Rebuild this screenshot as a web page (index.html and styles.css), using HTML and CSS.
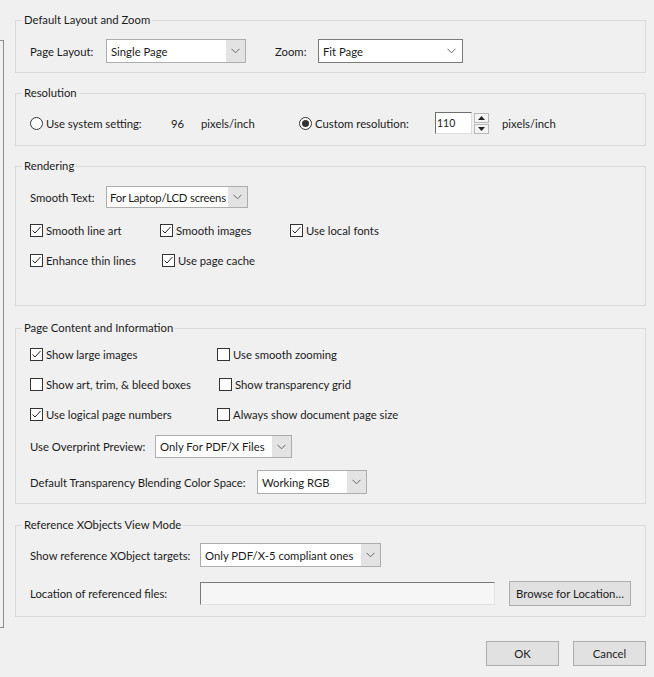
FILE: index.html
```html
<!DOCTYPE html>
<html>
<head>
<meta charset="utf-8">
<link rel="stylesheet" href="styles.css">
</head>
<body>
<div class="page">
  <div class="edge"></div>
  <div class="content">

    <fieldset class="group g1">
      <legend>Default Layout and Zoom</legend>
      <div class="row h24">
        <span class="lbl w76">Page Layout:</span>
        <div class="select w140 h24"><span class="val">Single Page</span><span class="arrow"><svg width="9" height="6" viewBox="0 0 9 6"><polyline points="0.5,0.8 4.5,4.8 8.5,0.8" fill="none" stroke="#666" stroke-width="1"/></svg></span></div>
        <span class="lbl w43 ml29">Zoom:</span>
        <div class="select plain w145 h24"><span class="val">Fit Page</span><span class="arrow"><svg width="9" height="6" viewBox="0 0 9 6"><polyline points="0.5,0.8 4.5,4.8 8.5,0.8" fill="none" stroke="#666" stroke-width="1"/></svg></span></div>
      </div>
    </fieldset>

    <fieldset class="group g2">
      <legend>Resolution</legend>
      <div class="row h22">
        <span class="radio"></span>
        <span class="lbl w125 ml3">Use system setting:</span>
        <span class="lbl w30">96</span>
        <span class="lbl w98">pixels/inch</span>
        <span class="radio on"></span>
        <span class="lbl w120 ml3">Custom resolution:</span>
        <div class="num">110</div>
        <div class="spin">
          <span class="spin-btn"><svg width="7" height="4" viewBox="0 0 7 4"><polygon points="3.5,0 7,4 0,4" fill="#222"/></svg></span>
          <span class="spin-btn"><svg width="7" height="4" viewBox="0 0 7 4"><polygon points="0,0 7,0 3.5,4" fill="#222"/></svg></span>
        </div>
        <span class="lbl ml13">pixels/inch</span>
      </div>
    </fieldset>

    <fieldset class="group g3">
      <legend>Rendering</legend>
      <div class="row h22">
        <span class="lbl w76">Smooth Text:</span>
        <div class="select w142 h22"><span class="val tight">For Laptop/LCD screens</span><span class="arrow"><svg width="9" height="6" viewBox="0 0 9 6"><polyline points="0.5,0.8 4.5,4.8 8.5,0.8" fill="none" stroke="#666" stroke-width="1"/></svg></span></div>
      </div>
      <div class="row h20 mt12">
        <span class="cb w130"><span class="box on"></span>Smooth line art</span>
        <span class="cb w130"><span class="box on"></span>Smooth images</span>
        <span class="cb"><span class="box on"></span>Use local fonts</span>
      </div>
      <div class="row h20 mt10">
        <span class="cb w132"><span class="box on"></span>Enhance thin lines</span>
        <span class="cb"><span class="box on"></span>Use page cache</span>
      </div>
    </fieldset>

    <fieldset class="group g4">
      <legend>Page Content and Information</legend>
      <div class="row h20">
        <span class="cb w187"><span class="box on"></span>Show large images</span>
        <span class="cb"><span class="box"></span>Use smooth zooming</span>
      </div>
      <div class="row h20 mt10">
        <span class="cb w189"><span class="box"></span>Show art, trim, &amp; bleed boxes</span>
        <span class="cb"><span class="box"></span>Show transparency grid</span>
      </div>
      <div class="row h20 mt10">
        <span class="cb w187"><span class="box on"></span>Use logical page numbers</span>
        <span class="cb"><span class="box"></span>Always show document page size</span>
      </div>
      <div class="row h23 mt11">
        <span class="lbl w125">Use Overprint Preview:</span>
        <div class="select w137 h23"><span class="val">Only For PDF/X Files</span><span class="arrow"><svg width="9" height="6" viewBox="0 0 9 6"><polyline points="0.5,0.8 4.5,4.8 8.5,0.8" fill="none" stroke="#666" stroke-width="1"/></svg></span></div>
      </div>
      <div class="row h24 mt12">
        <span class="lbl w227">Default Transparency Blending Color Space:</span>
        <div class="select w110 h24"><span class="val">Working RGB</span><span class="arrow"><svg width="9" height="6" viewBox="0 0 9 6"><polyline points="0.5,0.8 4.5,4.8 8.5,0.8" fill="none" stroke="#666" stroke-width="1"/></svg></span></div>
      </div>
    </fieldset>

    <fieldset class="group g5">
      <legend>Reference XObjects View Mode</legend>
      <div class="row h24">
        <span class="lbl w170">Show reference XObject targets:</span>
        <div class="select w181 h24"><span class="val">Only PDF/X-5 compliant ones</span><span class="arrow"><svg width="9" height="6" viewBox="0 0 9 6"><polyline points="0.5,0.8 4.5,4.8 8.5,0.8" fill="none" stroke="#666" stroke-width="1"/></svg></span></div>
      </div>
      <div class="row h25 mt14">
        <span class="lbl w170">Location of referenced files:</span>
        <div class="field"></div>
        <button class="btn w122 ml14">Browse for Location…</button>
      </div>
    </fieldset>

    <div class="actions">
      <button class="btn w73">OK</button>
      <button class="btn w73">Cancel</button>
    </div>
  </div>
</div>
</body>
</html>
```

FILE: styles.css
```css
html, body {
  margin: 0;
  padding: 0;
  background: #f0f0f0;
}
body {
  font-family: "Lato", "Noto Sans", sans-serif;
  font-size: 11.3px;
  color: #1b1b1b;
  width: 654px;
  height: 677px;
  overflow: hidden;
}
.page {
  display: flex;
  align-items: flex-start;
}
.edge {
  width: 3px;
  height: 586px;
  margin-top: 40px;
  border-top: 1px solid #8f8f8f;
  border-right: 1px solid #8f8f8f;
  border-bottom: 1px solid #8f8f8f;
  flex: none;
}
.content {
  margin-left: 11px;
  width: 631px;
  padding-top: 12px;
  flex: none;
}
.group {
  margin: 0;
  border: 1px solid #dadada;
  padding: 0 10px 0 14px;
  min-width: 0;
}
.group legend {
  padding: 0 2px;
  margin-left: -8px;
  line-height: 16px;
  height: 16px;
  font-size: 11.3px;
  color: #1b1b1b;
}
.g1 { padding-top: 11px; padding-bottom: 9px; }
.g2 { margin-top: 12px; padding-top: 11px; padding-bottom: 11px; }
.g3 { margin-top: 12px; padding-top: 12px; padding-bottom: 35px; }
.g4 { margin-top: 14px; padding-top: 8px; padding-bottom: 9px; }
.g5 { margin-top: 13px; padding-top: 10px; padding-bottom: 10px; }

.row {
  display: flex;
  align-items: center;
  white-space: nowrap;
}
.h20 { height: 20px; }
.h22 { height: 22px; }
.h23 { height: 23px; }
.h24 { height: 24px; }
.h25 { height: 25px; }
.mt10 { margin-top: 10px; }
.mt11 { margin-top: 11px; }
.mt12 { margin-top: 12px; }
.mt14 { margin-top: 14px; }
.ml3 { margin-left: 3px; }
.ml13 { margin-left: 13px; }
.ml14 { margin-left: 14px; }
.ml29 { margin-left: 29px; }

.lbl { flex: none; }
.w30 { width: 30px; }
.w43 { width: 43px; }
.w73 { width: 73px; }
.w76 { width: 76px; }
.w98 { width: 98px; }
.w110 { width: 110px; }
.w120 { width: 120px; }
.w122 { width: 122px; }
.w125 { width: 125px; }
.w130 { width: 130px; }
.w132 { width: 132px; }
.w137 { width: 137px; }
.w140 { width: 140px; }
.w142 { width: 142px; }
.w145 { width: 145px; }
.w170 { width: 170px; }
.w181 { width: 181px; }
.w187 { width: 187px; }
.w189 { width: 189px; }
.w227 { width: 227px; }

.select {
  box-sizing: border-box;
  display: flex;
  align-items: stretch;
  border: 1px solid #adadad;
  background: #ffffff;
  flex: none;
}
.select .val {
  flex: 1;
  display: flex;
  align-items: center;
  padding-left: 4px;
  overflow: hidden;
}
.select .val.tight {
  padding-left: 3px;
  letter-spacing: -0.2px;
}
.select .arrow {
  width: 19px;
  flex: none;
  display: flex;
  align-items: center;
  justify-content: center;
  background: #e3e3e3;
}
.select.plain {
  border-color: #7a7a7a;
}
.select.plain .arrow {
  background: #ffffff;
  width: 22px;
}

.radio {
  box-sizing: border-box;
  width: 13px;
  height: 13px;
  border: 1px solid #333;
  border-radius: 50%;
  background: #fff;
  flex: none;
  display: flex;
  align-items: center;
  justify-content: center;
}
.radio.on::after {
  content: "";
  width: 7px;
  height: 7px;
  border-radius: 50%;
  background: #333;
}

.num {
  box-sizing: border-box;
  width: 37px;
  height: 22px;
  border-top: 1px solid #6e6e6e;
  border-left: 1px solid #6e6e6e;
  border-right: 1px solid #dcdcdc;
  border-bottom: 1px solid #dcdcdc;
  background: #fff;
  padding-left: 1px;
  display: flex;
  align-items: center;
  font-size: 10.5px;
  flex: none;
}
.spin {
  margin-left: 2px;
  width: 15px;
  height: 21px;
  display: flex;
  flex-direction: column;
  gap: 1px;
  flex: none;
}
.spin-btn {
  box-sizing: border-box;
  flex: 1;
  border: 1px solid #b8b8b8;
  background: #f4f4f4;
  display: flex;
  align-items: center;
  justify-content: center;
}

.cb {
  display: flex;
  align-items: center;
  flex: none;
}
.box {
  box-sizing: border-box;
  width: 13px;
  height: 13px;
  border: 1px solid #333;
  background: #fff;
  margin-right: 3px;
  flex: none;
}
.box.on {
  background-image: url("data:image/svg+xml;utf8,<svg xmlns='http://www.w3.org/2000/svg' width='11' height='11' viewBox='0 0 11 11'><polyline points='1.5,5.5 4,8 9.5,2' fill='none' stroke='%23222' stroke-width='1'/></svg>");
  background-repeat: no-repeat;
  background-position: 0 0;
}

.field {
  box-sizing: border-box;
  width: 295px;
  height: 23px;
  border-top: 1px solid #7a7a7a;
  border-left: 1px solid #7a7a7a;
  border-right: 1px solid #e2e2e2;
  border-bottom: 1px solid #e2e2e2;
  background: #f6f6f6;
  flex: none;
}

.btn {
  box-sizing: border-box;
  height: 25px;
  border: 1px solid #adadad;
  background: #e1e1e1;
  font-family: inherit;
  font-size: 11.3px;
  color: #1b1b1b;
  padding: 0;
  flex: none;
}

.actions {
  margin-top: 24px;
  display: flex;
  justify-content: flex-end;
  gap: 14px;
}
```
